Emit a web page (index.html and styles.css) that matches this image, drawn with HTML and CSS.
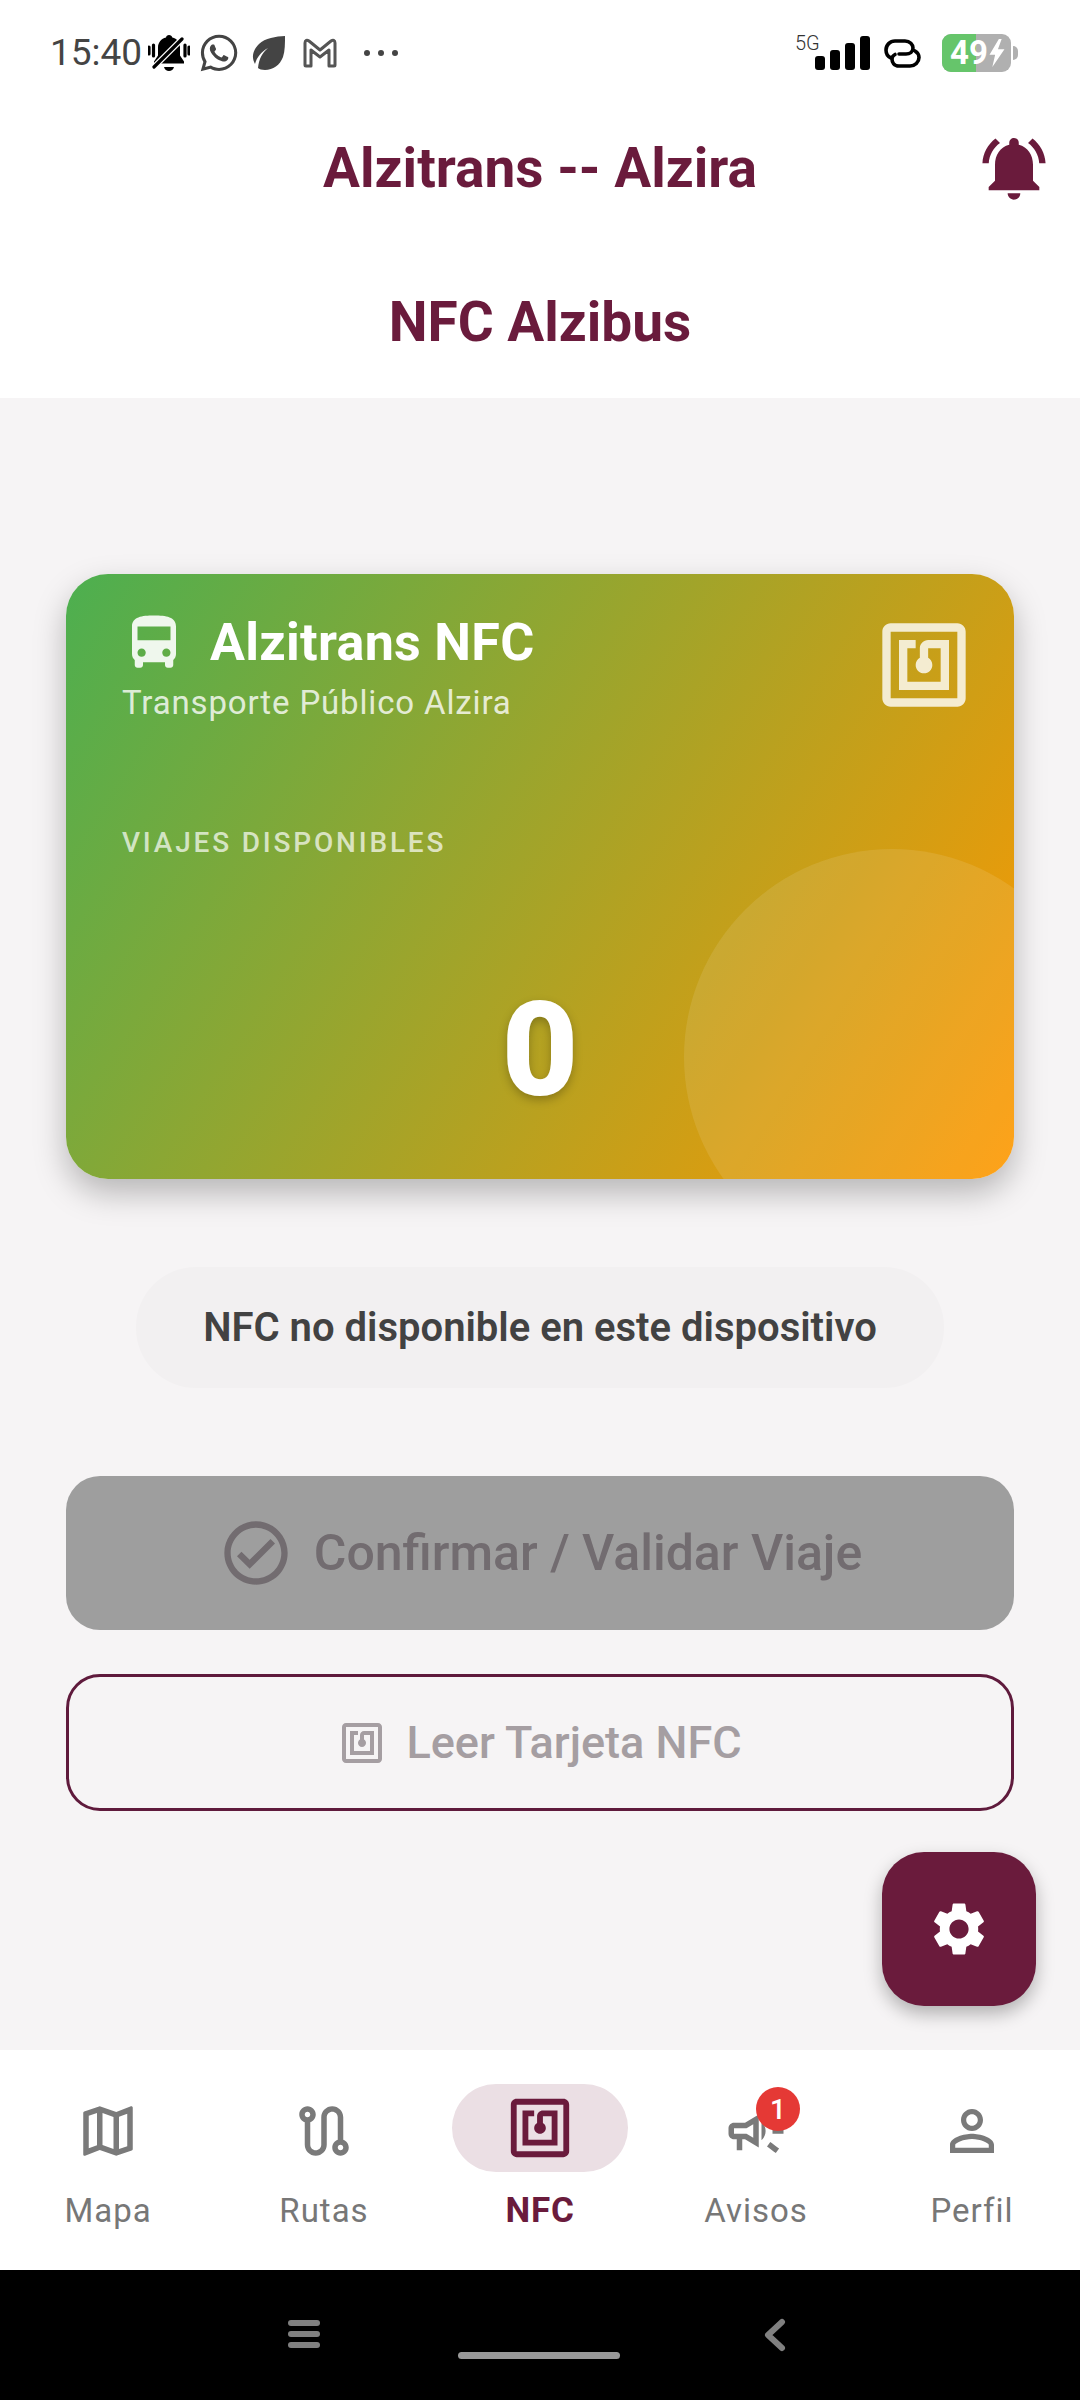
FILE: index.html
```html
<!DOCTYPE html>
<html lang="es">
<head>
<meta charset="utf-8">
<title>NFC Alzibus</title>
<link rel="stylesheet" href="styles.css">
</head>
<body>
<div class="app">
  <header class="header">
    <div class="statusbar">
      <div class="status-left">
        <span class="time">15:40</span>
        <svg class="si si-mute" viewBox="0 0 42 38"><path fill="#000" d="M21 1c1.700 0 3 1 3.300 2.600 4.700 1.100 7.700 5 7.700 9.900v8l4 6v2H6v-2l4-6v-8c0-4.900 3.300-8.800 8-9.900C18.200 2 19.400 1 21 1zM16 33h10c-.6 2.400-2.700 4-5 4s-4.400-1.600-5-4z"/><path stroke="#fff" stroke-width="6" d="M5 34 36 3"/><path stroke="#000" stroke-width="3.200" stroke-linecap="round" d="M6 33 34 5M1 13v7M5.500 11v11M37 11v11M41 13v7" fill="none"/></svg>
        <svg class="si si-wa" viewBox="0 0 24 24"><path fill="#444" d="M12.040 2c-5.460 0-9.910 4.450-9.910 9.910 0 1.750.46 3.450 1.320 4.950L2.050 22l5.250-1.380c1.450.79 3.080 1.210 4.740 1.210 5.460 0 9.910-4.450 9.910-9.910 0-2.650-1.030-5.140-2.900-7.010A9.816 9.816 0 0 0 12.040 2m.01 1.670c2.200 0 4.260.86 5.820 2.420a8.225 8.225 0 0 1 2.410 5.830c0 4.540-3.700 8.230-8.240 8.230-1.480 0-2.930-.39-4.190-1.150l-.3-.17-3.120.82.83-3.040-.2-.32a8.188 8.188 0 0 1-1.260-4.380c.01-4.540 3.700-8.240 8.250-8.240M8.530 7.330c-.16 0-.43.060-.66.310-.22.250-.87.860-.87 2.070 0 1.220.89 2.390 1 2.560.14.170 1.760 2.670 4.250 3.730.59.270 1.050.42 1.410.53.59.19 1.130.16 1.560.1.480-.07 1.460-.6 1.670-1.180.21-.58.21-1.070.15-1.180-.07-.1-.23-.16-.48-.27-.25-.14-1.470-.74-1.690-.82-.23-.08-.37-.12-.56.120-.16.25-.64.81-.78.97-.15.17-.29.19-.53.07-.26-.13-1.060-.39-2-1.230-.74-.66-1.230-1.470-1.380-1.720-.12-.24-.01-.39.11-.5.11-.11.27-.29.37-.44.13-.14.17-.25.25-.41.08-.17.04-.31-.02-.43-.06-.11-.56-1.350-.77-1.840-.2-.48-.4-.42-.56-.43-.14 0-.3-.01-.47-.01z"/></svg>
        <svg class="si si-leaf" viewBox="0 0 34 34"><path fill="#444" d="M33 0c-9 .5-20 2-26 8C1 14-1 21 3 28c2-7 6-12 13-16-6 5-9 11-10 20 1 1.300 4 2 7 2 8 0 15-5 18-13 2-6 2-14 2-21z"/></svg>
        <svg class="si si-gm" viewBox="0 0 34 30"><path fill="none" stroke="#555" stroke-width="3" stroke-linejoin="round" d="M2 27V5c0-3 2-3.500 4-2l11 9 11-9c2-1.500 4-1 4 2v22a1 1 0 0 1-1 1h-5V12l-9 7-9-7v16H3a1 1 0 0 1-1-1z"/></svg>
        <div class="dots"><i></i><i></i><i></i></div>
      </div>
      <div class="status-right">
        <span class="net">5G</span>
        <div class="bars"><i class="b1"></i><i class="b2"></i><i class="b3"></i><i class="b4"></i></div>
        <svg class="si si-link" viewBox="0 0 37 29"><path fill="none" stroke="#000" stroke-width="3.600" stroke-linecap="round" d="M7 19C3.500 17.500 2 14.500 2 11c0-5 4-9 9-9h10c5 0 8 3.500 8 7 0 3.500-3 6-7 6h-7M31 12c2.500 1.500 4 3.500 4 6.500C35 23 31 27 26 27H15c-5 0-7-3.500-7-7 0-2 1-3.500 3-4.500"/></svg>
        <div class="battery">
          <div class="batt-body"><span class="batt-fill"></span><span class="batt-text">49</span><svg class="batt-bolt" viewBox="0 0 16 30"><path fill="#fff" d="M10 0 0 17h6l-3 13 13-19H9l4-11z"/></svg></div>
          <span class="batt-tip"></span>
        </div>
      </div>
    </div>
    <div class="appbar">
      <h1 class="title">Alzitrans -- Alzira</h1>
      <svg class="bell" viewBox="0 0 24 24"><path d="M7.580 4.080 6.150 2.650C3.750 4.480 2.170 7.300 2.030 10.500h2c.15-2.650 1.510-4.970 3.550-6.420zm12.390 6.420h2c-.15-3.200-1.730-6.020-4.120-7.850l-1.420 1.430c2.020 1.450 3.390 3.770 3.540 6.420zM18 11c0-3.070-1.640-5.640-4.500-6.320V4c0-.83-.67-1.500-1.500-1.500s-1.500.67-1.500 1.500v.68C7.630 5.360 6 7.920 6 11v5l-2 2v1h16v-1l-2-2v-5zm-6 11c.14 0 .27-.01.4-.04.65-.14 1.180-.58 1.440-1.180.1-.24.15-.5.15-.78h-4c.01 1.100.9 2 2.010 2z"/></svg>
    </div>
    <h2 class="subtitle">NFC Alzibus</h2>
  </header>

  <main class="content">
    <section class="card">
      <span class="card-circle"></span>
      <div class="card-top">
        <div class="card-brand">
          <div class="brand-row">
            <svg class="bus" viewBox="0 0 24 24"><path d="M4 16c0 .88.39 1.670 1 2.220V20c0 .55.45 1 1 1h1c.55 0 1-.45 1-1v-1h8v1c0 .55.45 1 1 1h1c.55 0 1-.45 1-1v-1.780c.61-.55 1-1.340 1-2.220V6c0-3.500-3.580-4-8-4s-8 .5-8 4v10zm3.500 1c-.83 0-1.500-.67-1.500-1.500S6.670 14 7.500 14s1.500.67 1.500 1.500S8.330 17 7.500 17zm9 0c-.83 0-1.500-.67-1.500-1.500s.67-1.500 1.500-1.500 1.500.67 1.500 1.500-.67 1.500-1.500 1.500zm1.500-6H6V6h12v5z"/></svg>
            <span class="brand-name">Alzitrans NFC</span>
          </div>
          <div class="brand-sub">Transporte Público Alzira</div>
        </div>
        <svg class="card-nfc" viewBox="0 0 24 24"><path d="M20 2H4c-1.100 0-2 .9-2 2v16c0 1.100.9 2 2 2h16c1.100 0 2-.9 2-2V4c0-1.100-.9-2-2-2zm0 18H4V4h16v16zM18 6h-5c-1.100 0-2 .9-2 2v2.280c-.6.35-1 .98-1 1.720 0 1.100.9 2 2 2s2-.9 2-2c0-.74-.4-1.380-1-1.720V8h3v8H8V8h2V6H6v12h12V6z"/></svg>
      </div>
      <div class="trips-label">VIAJES DISPONIBLES</div>
      <div class="trips-count">0</div>
    </section>

    <div class="nfc-status">NFC no disponible en este dispositivo</div>

    <button class="btn-confirm" type="button">
      <svg class="btn-confirm-icon" viewBox="0 0 24 24"><path d="M12 2C6.480 2 2 6.480 2 12s4.480 10 10 10 10-4.480 10-10S17.520 2 12 2zm0 18c-4.410 0-8-3.590-8-8s3.590-8 8-8 8 3.590 8 8-3.590 8-8 8zm4.590-12.420L10 14.170l-2.590-2.580L6 13l4 4 8-8z"/></svg>
      <span>Confirmar / Validar Viaje</span>
    </button>

    <button class="btn-read" type="button">
      <svg class="btn-read-icon" viewBox="0 0 24 24"><path d="M20 2H4c-1.100 0-2 .9-2 2v16c0 1.100.9 2 2 2h16c1.100 0 2-.9 2-2V4c0-1.100-.9-2-2-2zm0 18H4V4h16v16zM18 6h-5c-1.100 0-2 .9-2 2v2.280c-.6.35-1 .98-1 1.720 0 1.100.9 2 2 2s2-.9 2-2c0-.74-.4-1.380-1-1.720V8h3v8H8V8h2V6H6v12h12V6z"/></svg>
      <span>Leer Tarjeta NFC</span>
    </button>

    <button class="fab" type="button" aria-label="Ajustes">
      <svg class="fab-icon" viewBox="0 0 24 24"><path d="M19.140 12.940c.04-.3.06-.61.06-.94 0-.32-.02-.64-.07-.94l2.030-1.580c.18-.14.23-.41.12-.61l-1.920-3.320c-.12-.22-.37-.29-.59-.22l-2.390.96c-.5-.38-1.030-.7-1.620-.94l-.36-2.540c-.04-.24-.24-.41-.48-.41h-3.840c-.24 0-.43.17-.47.41l-.36 2.540c-.59.24-1.130.57-1.620.94l-2.390-.96c-.22-.08-.47 0-.59.22L2.740 8.870c-.12.21-.08.47.12.61l2.030 1.580c-.05.3-.09.63-.09.94s.02.64.07.94l-2.030 1.580c-.18.14-.23.41-.12.61l1.920 3.320c.12.22.37.29.59.22l2.390-.96c.5.38 1.030.7 1.620.94l.36 2.540c.05.24.24.41.48.41h3.840c.24 0 .44-.17.47-.41l.36-2.540c.59-.24 1.130-.56 1.620-.94l2.390.96c.22.08.47 0 .59-.22l1.920-3.320c.12-.22.07-.47-.12-.61l-2.010-1.580zM12 15.600c-1.980 0-3.600-1.620-3.600-3.600s1.620-3.600 3.600-3.600 3.600 1.620 3.600 3.600-1.620 3.600-3.600 3.600z"/></svg>
    </button>
  </main>

  <nav class="nav">
    <div class="nav-item">
      <div class="nav-slot"><svg class="nav-icon" viewBox="0 0 24 24"><path d="M20.500 3l-.16.03L15 5.100 9 3 3.360 4.900c-.21.07-.36.25-.36.48V20.500c0 .28.22.5.5.5l.16-.03L9 18.900l6 2.100 5.640-1.900c.21-.07.36-.25.36-.48V3.500c0-.28-.22-.5-.5-.5zM10 5.470l4 1.400v11.660l-4-1.400V5.470zm-5 .99l3-1.010v11.700l-3 1.160V6.460zm14 11.080l-3 1.010V6.860l3-1.160v11.840z"/></svg></div>
      <span class="nav-label">Mapa</span>
    </div>
    <div class="nav-item">
      <div class="nav-slot"><svg class="nav-icon" viewBox="0 0 24 24"><path d="M19 15.180V7c0-2.210-1.790-4-4-4s-4 1.790-4 4v10c0 1.100-.9 2-2 2s-2-.9-2-2V8.820C8.160 8.400 9 7.300 9 6c0-1.660-1.340-3-3-3S3 4.340 3 6c0 1.300.84 2.400 2 2.820V17c0 2.210 1.790 4 4 4s4-1.790 4-4V7c0-1.100.9-2 2-2s2 .9 2 2v8.180c-1.160.41-2 1.510-2 2.820 0 1.660 1.340 3 3 3s3-1.340 3-3c0-1.300-.84-2.400-2-2.820zM6 7c-.55 0-1-.45-1-1s.45-1 1-1 1 .45 1 1-.45 1-1 1zm12 12c-.55 0-1-.45-1-1s.45-1 1-1 1 .45 1 1-.45 1-1 1z"/></svg></div>
      <span class="nav-label">Rutas</span>
    </div>
    <div class="nav-item nav-item-active">
      <div class="nav-slot nav-pill"><svg class="nav-icon-active" viewBox="0 0 24 24"><path d="M20 2H4c-1.100 0-2 .9-2 2v16c0 1.100.9 2 2 2h16c1.100 0 2-.9 2-2V4c0-1.100-.9-2-2-2zm0 18H4V4h16v16zM18 6h-5c-1.100 0-2 .9-2 2v2.280c-.6.35-1 .98-1 1.720 0 1.100.9 2 2 2s2-.9 2-2c0-.74-.4-1.380-1-1.720V8h3v8H8V8h2V6H6v12h12V6z"/></svg></div>
      <span class="nav-label">NFC</span>
    </div>
    <div class="nav-item">
      <div class="nav-slot nav-badged">
        <svg class="nav-icon" viewBox="0 0 24 24"><path d="M18 11v2h4v-2h-4zm-2 6.610c.96.71 2.210 1.650 3.200 2.390.4-.53.8-1.070 1.200-1.600-.99-.74-2.240-1.680-3.200-2.400-.4.54-.8 1.080-1.200 1.610zM20.400 5.600c-.4-.53-.8-1.070-1.200-1.600-.99.74-2.240 1.680-3.200 2.400.4.53.8 1.070 1.200 1.600.96-.72 2.210-1.650 3.200-2.400zM4 9c-1.100 0-2 .9-2 2v2c0 1.100.9 2 2 2h1v4h2v-4h1l5 3V6L8 9H4zm5.030 1.710L11 9.530v4.940l-1.970-1.180-.48-.29H4v-2h4.550l.48-.29zM15.500 12c0-1.330-.58-2.530-1.500-3.350v6.690c.92-.81 1.500-2.010 1.500-3.340z"/></svg>
        <span class="badge">1</span>
      </div>
      <span class="nav-label">Avisos</span>
    </div>
    <div class="nav-item">
      <div class="nav-slot"><svg class="nav-icon" viewBox="0 0 24 24"><path d="M12 5.900c1.160 0 2.100.94 2.100 2.100s-.94 2.100-2.100 2.100S9.900 9.160 9.900 8s.94-2.100 2.100-2.100m0 9c2.970 0 6.100 1.460 6.100 2.100v1.100H5.900V17c0-.64 3.130-2.100 6.100-2.100M12 4C9.790 4 8 5.790 8 8s1.790 4 4 4 4-1.790 4-4-1.790-4-4-4zm0 9c-2.670 0-8 1.340-8 4v3h16v-3c0-2.660-5.330-4-8-4z"/></svg></div>
      <span class="nav-label">Perfil</span>
    </div>
  </nav>

  <footer class="sysbar">
    <div class="sys-menu"><i></i><i></i><i></i></div>
    <div class="sys-home"></div>
    <svg class="sys-back" viewBox="0 0 22 34"><path fill="none" stroke="#808080" stroke-width="6" stroke-linecap="round" stroke-linejoin="round" d="M18 4 4 17l14 13"/></svg>
  </footer>
</div>
</body>
</html>
```

FILE: styles.css
```css
* { box-sizing: border-box; }
html, body { margin: 0; padding: 0; }
body { background: #000; font-family: Roboto, "Liberation Sans", sans-serif; }
.app { width: 1080px; height: 2400px; display: flex; flex-direction: column; overflow: hidden; }

.header { height: 398px; background: #fff; flex: none; }
.statusbar { height: 106px; padding: 0 62px 0 50px; display: flex; justify-content: space-between; align-items: center; }
.status-left { display: flex; align-items: center; }
.status-right { display: flex; align-items: center; position: relative; }
.si { display: block; flex: none; }
.time { font-size: 37px; color: #444; line-height: 40px; width: 98px; }
.si-mute { width: 42px; height: 38px; margin-right: 7px; }
.si-wa { width: 44px; height: 44px; margin-right: 11px; }
.si-leaf { width: 34px; height: 34px; margin-right: 17px; }
.si-gm { width: 34px; height: 30px; margin-right: 27px; }
.dots { display: flex; gap: 8px; }
.dots i { display: block; width: 6px; height: 6px; border-radius: 50%; background: #444; }

.net { font-size: 20px; font-weight: 300; color: #333; line-height: 20px; margin: -20px 0 0 0; width: 24px; }
.bars { display: flex; align-items: flex-end; gap: 5px; height: 34px; margin: 0 14px 0 -4px; }
.bars i { display: block; width: 10px; background: #000; border-radius: 3px; }
.bars .b1 { height: 14px; }
.bars .b2 { height: 20px; }
.bars .b3 { height: 27px; }
.bars .b4 { height: 34px; }
.si-link { width: 37px; height: 29px; margin-right: 21px; }
.battery { display: flex; align-items: center; }
.batt-body { width: 69px; height: 38px; border-radius: 9px; background: #b0b0b0; position: relative; overflow: hidden; display: flex; align-items: center; padding-left: 8px; }
.batt-fill { position: absolute; left: 0; top: 0; bottom: 0; width: 34px; background: #66c56b; }
.batt-text { position: relative; font-size: 33px; font-weight: 700; color: #fff; line-height: 38px; }
.batt-bolt { position: relative; width: 16px; height: 28px; margin-left: 1px; }
.batt-tip { width: 5px; height: 14px; background: #b0b0b0; border-radius: 0 7px 7px 0; margin-left: 2px; }

.appbar { height: 124px; position: relative; display: flex; align-items: center; justify-content: center; }
.title { margin: 0; font-size: 55px; font-weight: 700; line-height: 66px; color: #6a1b3c; }
.bell { position: absolute; right: 28px; top: 24px; width: 76px; height: 76px; fill: #6a1b3c; }
.subtitle { margin: 0; padding-top: 59px; text-align: center; font-size: 55px; font-weight: 700; line-height: 66px; color: #6a1b3c; }

.content { flex: 1; background: #f6f4f5; padding: 176px 66px 0; position: relative; display: flex; flex-direction: column; }

.card { height: 605px; flex: none; border-radius: 42px; padding: 36px 56px 0; position: relative; overflow: hidden; color: #fff;
  background: linear-gradient(122.5deg, #4caf50, #ff9800); box-shadow: 0 14px 32px rgba(0,0,0,.26); }
.card-circle { position: absolute; left: 618px; top: 275px; width: 416px; height: 416px; border-radius: 50%; background: rgba(255,255,255,.1); }
.card-top { display: flex; justify-content: space-between; align-items: flex-start; position: relative; }
.brand-row { display: flex; align-items: center; gap: 23px; height: 66px; }
.bus { width: 66px; height: 66px; margin-left: -1px; fill: rgba(255,255,255,.9); }
.brand-name { font-size: 52px; font-weight: 700; line-height: 66px; letter-spacing: .3px; }
.brand-sub { margin-top: 7px; font-size: 33px; line-height: 40px; letter-spacing: .85px; color: rgba(255,255,255,.8); }
.card-nfc { width: 100px; height: 100px; margin: 5px -16px 0 0; fill: rgba(255,255,255,.8); }
.trips-label { position: relative; margin-top: 103px; font-size: 28px; line-height: 34px; letter-spacing: 2.8px; color: rgba(255,255,255,.7); font-weight: 500; }
.trips-count { position: relative; margin-top: 115px; text-align: center; font-size: 132px; font-weight: 900; line-height: 150px; text-shadow: 0 4px 10px rgba(0,0,0,.25); }

.nfc-status { margin: 88px auto 0; width: 808px; height: 121px; flex: none; border-radius: 60px; background: #f2f0f1; display: flex; align-items: center; justify-content: center; font-size: 40px; font-weight: 600; color: #424242; }

.btn-confirm, .btn-read { width: 100%; flex: none; display: flex; align-items: center; justify-content: center; font-family: inherit; padding: 0; }
.btn-confirm { margin-top: 88px; height: 154px; border: 0; border-radius: 34px; background: #9e9e9e; color: #726c70; font-size: 50px; font-weight: 500; gap: 20px; }
.btn-confirm-icon { width: 76px; height: 76px; fill: #726c70; }
.btn-read { margin-top: 44px; height: 137px; border: 3px solid #5f1a3c; border-radius: 34px; background: transparent; color: #a59ea2; font-size: 45px; font-weight: 500; gap: 20px; }
.btn-read-icon { width: 48px; height: 48px; fill: #a59ea2; }

.fab { position: absolute; left: 882px; top: 1454px; width: 154px; height: 154px; border: 0; padding: 0; border-radius: 42px; background: #6a1b3c; display: flex; align-items: center; justify-content: center; box-shadow: 0 8px 18px rgba(0,0,0,.28); }
.fab-icon { width: 64px; height: 64px; fill: #fff; }

.nav { height: 220px; flex: none; background: #fff; display: grid; grid-template-columns: repeat(5, 216px); padding-top: 34px; }
.nav-item { display: flex; flex-direction: column; align-items: center; }
.nav-slot { position: relative; width: 176px; height: 88px; display: flex; align-items: center; justify-content: center; }
.nav-icon { width: 66px; height: 66px; fill: #7a7a7a; margin-top: 6px; }
.nav-pill { background: #ebdfe4; border-radius: 44px; }
.nav-icon-active { width: 70px; height: 70px; fill: #6a1b3c; }
.nav-label { margin-top: 19px; font-size: 33px; line-height: 40px; letter-spacing: 1px; color: #777; }
.nav-item-active .nav-label { color: #6a1b3c; font-size: 35px; font-weight: 700; letter-spacing: .8px; }
.badge { position: absolute; left: 88px; top: 3px; width: 44px; height: 44px; border-radius: 50%; background: #e53935; color: #fff; font-size: 28px; font-weight: 500; display: flex; align-items: center; justify-content: center; }

.sysbar { height: 130px; flex: none; background: #000; position: relative; display: flex; align-items: flex-start; }
.sys-menu { margin: 50px 0 0 288px; width: 32px; display: flex; flex-direction: column; gap: 5px; }
.sys-menu i { display: block; height: 6px; border-radius: 3px; background: #808080; }
.sys-home { margin: 82px 0 0 138px; width: 162px; height: 7px; border-radius: 4px; background: #999; }
.sys-back { margin: 48px 0 0 144px; width: 22px; height: 34px; }
```
